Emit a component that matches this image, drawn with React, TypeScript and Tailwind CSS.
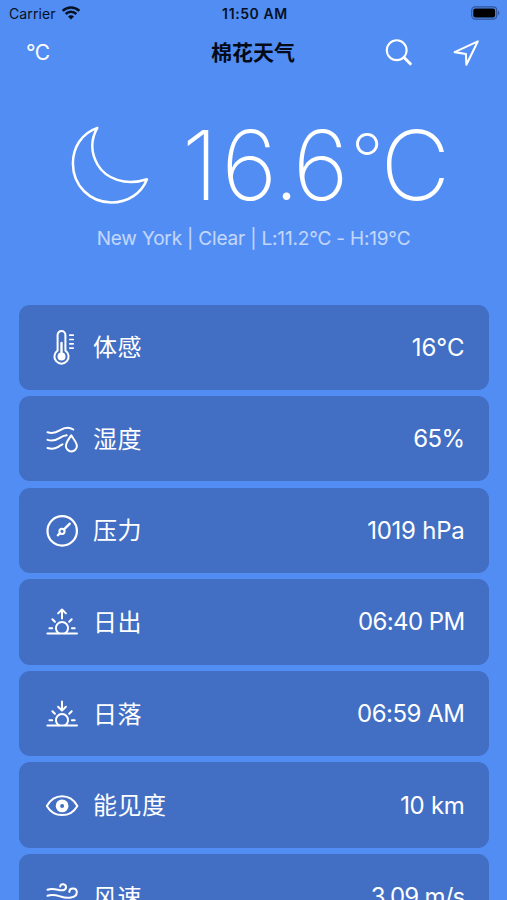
import clsx from 'clsx'
import type { ReactNode } from 'react'

// ─── Types ────────────────────────────────────────────────────────────────────

interface WeatherRow {
  label: string
  value: string
  icon: ReactNode
  valueClass: string
}

// ─── Icons ────────────────────────────────────────────────────────────────────

function RowIcon({ children }: { children: ReactNode }) {
  return (
    <svg
      viewBox="0 0 34 40"
      className="h-10 w-[34px] shrink-0"
      fill="none"
      stroke="currentColor"
      strokeWidth="2"
      strokeLinecap="round"
      strokeLinejoin="round"
    >
      {children}
    </svg>
  )
}

function ThermometerIcon() {
  return (
    <RowIcon>
      <path d="M12.6 22.6V7a3.9 3.9 0 0 1 7.8 0v15.6a7.1 7.1 0 1 1-7.8 0z" />
      <path d="M16.5 15V28" strokeWidth="2.4" />
      <circle cx="16.5" cy="28.4" r="4" fill="currentColor" stroke="none" />
      <path d="M24.8 7.2h3.4M24.8 11.5h3.4M24.8 15.8h3.4M24.8 20.1h3.4" strokeWidth="1.7" />
    </RowIcon>
  )
}

function HumidityIcon() {
  return (
    <RowIcon>
      <path d="M2.5 13.2c5 1.7 8.6.4 12.2-1.8 4.6-2.8 9.3-3.6 13.6-.9" />
      <path d="M2.5 20.9c5 1.7 8.4.4 11.8-1.8 2.5-1.7 4.7-2.7 7.4-2.9" />
      <path d="M2.5 29c4.8 1.5 7.5.8 10.3-.9 1.6-1 3-1.9 4.7-2.7" />
      <path d="M26.2 16.4c-2.2 3.4-5.3 7.1-5.3 10.5a5.5 5.5 0 0 0 11 0c0-3.4-3.5-7.1-5.7-10.5z" />
    </RowIcon>
  )
}

function PressureIcon() {
  return (
    <RowIcon>
      <circle cx="17.2" cy="19.9" r="14.7" strokeWidth="2.2" />
      <circle cx="17" cy="20.3" r="2.6" />
      <path d="M19 18.3l5.8-5.6M15 22.2l-2.2 2.1" strokeWidth="2.3" />
    </RowIcon>
  )
}

function SunIcon({ rising }: { rising: boolean }) {
  return (
    <RowIcon>
      <path d="M2.4 31.6h29.6" />
      <path d="M13.7 31.2a6.1 6.1 0 1 1 6.6 0" />
      <path d="M4.4 26.2h2.8M26.9 26.2h2.8M7.4 17.2l2.5 2.5M26.7 17.2l-2.5 2.5" />
      {rising ? (
        <path d="M17 16.6V7.6M13.1 11.4L17 7.5l3.9 3.9" />
      ) : (
        <path d="M17 7.5v9M13.1 12.7L17 16.6l3.9-3.9" />
      )}
    </RowIcon>
  )
}

function EyeIcon() {
  return (
    <RowIcon>
      <path d="M1.8 19.9C5.5 13.6 11 10.3 17.1 10.3S28.8 13.6 32.4 19.9C28.8 26.1 23.2 29.1 17.1 29.1S5.5 26.1 1.8 19.9z" />
      <circle cx="17.1" cy="19.9" r="4.2" strokeWidth="4.4" />
    </RowIcon>
  )
}

function WindIcon() {
  return (
    <RowIcon>
      <path d="M2.5 12.7c4.2-1.7 7.2-.8 10.4.1 3.2 1 8.1.8 8.1-2.6 0-3.6-5.4-4-5.8-.7" />
      <path d="M2.5 18.8c5-1.9 8.5-.7 13 .7 6 1.9 16.3 2.2 16.3-4.2 0-4.9-7.3-5.1-7.5-.4" />
      <path d="M2.5 25.3c5-1.9 8.5-.7 12.6.7 4.2 1.4 6.2 5.2 2.6 6.3" />
    </RowIcon>
  )
}

function MoonIcon() {
  return (
    <svg
      viewBox="0 0 80 80"
      className="size-20 shrink-0"
      fill="none"
      stroke="currentColor"
      strokeWidth="2.5"
      strokeLinejoin="round"
    >
      <path d="M27.3 2.9C11.5 8.5 2.9 22.5 2.9 38.5C2.9 60.5 20 77.5 41.5 77.5C58 77.5 71.5 68.3 77 54.3C55.5 61.5 35.5 53.5 27.5 39.5C20.5 27 20.8 14.5 27.3 2.9z" />
    </svg>
  )
}

function WifiIcon() {
  return (
    <svg viewBox="0 0 18 14" className="-mt-[2px] h-[14px] w-[18px]" fill="none" stroke="currentColor" strokeWidth="2.5">
      <path d="M.7 4.9a11.7 11.7 0 0 1 16.6 0" />
      <path d="M3.7 8a7.5 7.5 0 0 1 10.6 0" />
      <path d="M9 13.4L6 10.4a4.2 4.2 0 0 1 6 0z" fill="currentColor" stroke="none" />
    </svg>
  )
}

function BatteryIcon() {
  return (
    <svg viewBox="0 0 30 14" className="-mt-[2px] h-[14px] w-[30px]">
      <rect x=".7" y=".9" width="25" height="12.2" rx="3.5" fill="none" stroke="#2f5396" strokeWidth="1.1" />
      <rect x="2.3" y="2.5" width="21.8" height="9" rx="2" fill="#000" />
      <path d="M27 4.8c1.7.5 1.7 3.9 0 4.4z" fill="#2f5396" />
    </svg>
  )
}

// ─── Data ─────────────────────────────────────────────────────────────────────

const rows: WeatherRow[] = [
  { label: '体感', value: '16°C', icon: <ThermometerIcon />, valueClass: 'tracking-normal' },
  { label: '湿度', value: '65%', icon: <HumidityIcon />, valueClass: 'tracking-[-0.6px]' },
  { label: '压力', value: '1019 hPa', icon: <PressureIcon />, valueClass: 'tracking-[-0.25px]' },
  { label: '日出', value: '06:40 PM', icon: <SunIcon rising />, valueClass: 'tracking-[-0.6px]' },
  { label: '日落', value: '06:59 AM', icon: <SunIcon rising={false} />, valueClass: 'tracking-[-0.5px]' },
  { label: '能见度', value: '10 km', icon: <EyeIcon />, valueClass: 'tracking-[-0.3px]' },
  { label: '风速', value: '3.09 m/s', icon: <WindIcon />, valueClass: 'tracking-[-0.75px]' },
]

// ─── Sections ─────────────────────────────────────────────────────────────────

function StatusBar() {
  return (
    <div className="grid h-7 grid-cols-3 items-center pr-[6px] pl-[9px] text-[14px] text-[#061126]">
      <div className="flex items-center gap-[6px]">
        <span className="-mt-px tracking-[0.1px]">Carrier</span>
        <WifiIcon />
      </div>
      <span className="-mt-px text-center font-semibold tracking-[0.6px]">11:50 AM</span>
      <div className="flex justify-end">
        <BatteryIcon />
      </div>
    </div>
  )
}

function NavBar() {
  return (
    <div className="grid h-12 grid-cols-3 items-center pt-px pr-[27px] pl-[26px]">
      <span className="text-[21px] tracking-[-0.5px]">°C</span>
      <h1 className="pt-px text-center text-[21px] font-bold text-[#040a18]">棉花天气</h1>
      <div className="flex items-center justify-end gap-10">
        <svg viewBox="0 0 28 28" className="size-7" fill="none" stroke="currentColor" strokeLinecap="round">
          <circle cx="12.7" cy="11.2" r="9.9" strokeWidth="2.1" />
          <path d="M20 18.5l6.3 6.3" strokeWidth="3" />
        </svg>
        <svg
          viewBox="0 0 28 28"
          className="size-7"
          fill="none"
          stroke="currentColor"
          strokeWidth="2.1"
          strokeLinejoin="round"
        >
          <path d="M25.8 2.4L2.6 13.1l11.3 1.9.5 10.7z" />
        </svg>
      </div>
    </div>
  )
}

function CurrentWeather() {
  return (
    <div className="flex h-[228.5px] flex-col pt-[49px]">
      <div className="flex h-20 items-center justify-between pr-[57px] pl-[70px]">
        <MoonIcon />
        <div className="flex items-start text-[96px] leading-none font-[160] whitespace-nowrap">
          <span className="tracking-[3px]">1</span>
          <span className="tracking-[-4px]">6</span>
          <span className="tracking-[-7px]">.</span>
          <span className="tracking-[2px]">6</span>
          <span className="mt-[6px] text-[72px] font-[250] tracking-[-3px]">°</span>
          <span>C</span>
        </div>
      </div>
      <p className="mt-[19px] text-center text-[19px] leading-[30px] tracking-[-0.18px] whitespace-nowrap text-white/65">
        New York | Clear | L:11.2°C - H:19°C
      </p>
    </div>
  )
}

function WeatherCard({ label, value, icon, valueClass }: WeatherRow) {
  return (
    <div className="flex h-[85.4px] shrink-0 items-center rounded-[11px] bg-[#426fc4] pt-px pr-[24px] pl-[26px]">
      {icon}
      <span className="mt-px ml-[14px] text-[24px] tracking-[0.5px]">{label}</span>
      <span className={clsx('ml-auto text-[24px]', valueClass)}>{value}</span>
    </div>
  )
}

// ─── App ──────────────────────────────────────────────────────────────────────

export default function App() {
  return (
    <div className="h-[900px] w-[507px] overflow-hidden bg-[#528df3] font-['Inter','Noto_Sans_CJK_SC',sans-serif] text-white">
      <StatusBar />
      <NavBar />
      <CurrentWeather />
      <div className="flex flex-col gap-[6.2px] pr-[18.5px] pl-[19px]">
        {rows.map((row) => (
          <WeatherCard key={row.label} {...row} />
        ))}
      </div>
    </div>
  )
}
